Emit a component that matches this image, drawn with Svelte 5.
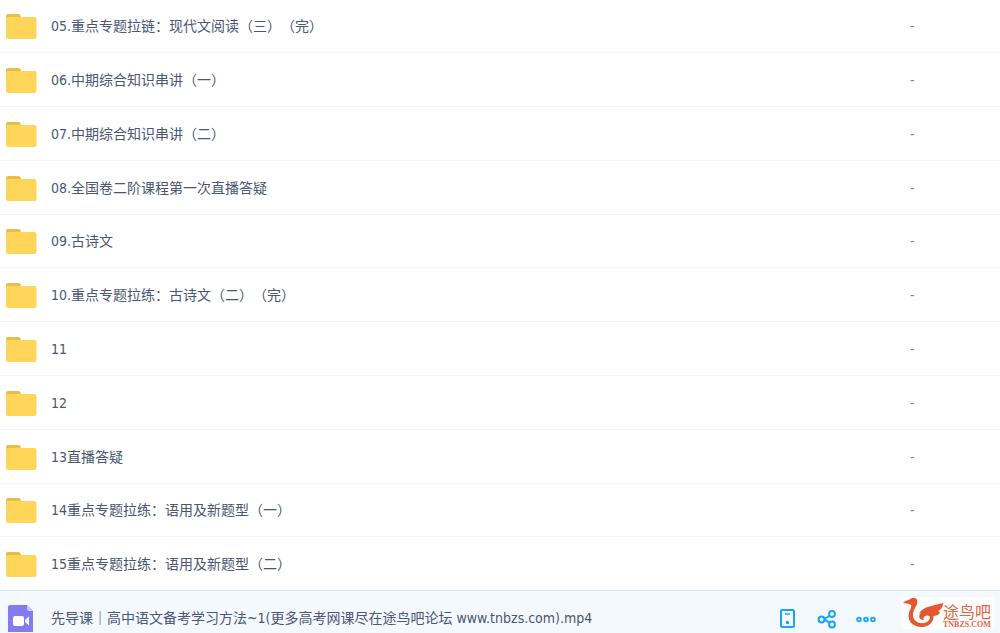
<script>
    const folders = [
        '05.重点专题拉链：现代文阅读（三）（完）',
        '06.中期综合知识串讲（一）',
        '07.中期综合知识串讲（二）',
        '08.全国卷二阶课程第一次直播答疑',
        '09.古诗文',
        '10.重点专题拉练：古诗文（二）（完）',
        '11',
        '12',
        '13直播答疑',
        '14重点专题拉练：语用及新题型（一）',
        '15重点专题拉练：语用及新题型（二）'
    ];

    const video = '先导课｜高中语文备考学习方法~1(更多高考网课尽在途鸟吧论坛 www.tnbzs.com).mp4';
</script>

<main>
    <table>
        <tbody>
            {#each folders as folder}
                <tr>
                    <td>
                        <div class="name">
                            <svg class="icon" width="32" height="28" viewBox="0 0 32 28" aria-hidden="true">
                                <path d="M1 10V4Q1 2 3 2h10.500q1.500 0 2 1.500L17 10z" fill="#e7bd4b" />
                                <path d="M1 6.500Q1 5 2.500 5H29.500Q31.500 5 31.500 7V25Q31.500 27 29.500 27H3Q1 27 1 25z" fill="#ffd65a" />
                            </svg>
                            <span>{folder}</span>
                        </div>
                    </td>
                    <td class="actions"></td>
                    <td class="size">-</td>
                </tr>
            {/each}
            <tr class="active">
                <td>
                    <div class="name">
                        <svg class="icon" width="32" height="28" viewBox="0 0 32 28" aria-hidden="true">
                            <path d="M3 3Q3 1 5 1H22L28 7V28H3z" fill="#837cf1" />
                            <path d="M22 1L28 7H24Q22 7 22 5z" fill="#c9c6fb" />
                            <rect x="8" y="12" width="11" height="10" rx="2" fill="#fff" />
                            <path d="M20 16L24 12.500V21.500L20 18z" fill="#fff" />
                        </svg>
                        <span>{video}</span>
                    </div>
                </td>
                <td class="actions">
                    <div class="buttons">
                        <button aria-label="发送到手机">
                            <svg width="20" height="22" viewBox="0 0 20 22" fill="none" stroke="#16a5f3" stroke-width="2">
                                <rect x="3" y="3" width="13" height="17" rx="1.500" />
                                <path d="M7 7h5" stroke-width="1.500" />
                                <circle cx="9.500" cy="15.500" r="1.700" fill="#16a5f3" stroke="none" />
                            </svg>
                        </button>
                        <button aria-label="分享">
                            <svg width="20" height="22" viewBox="0 0 20 22" fill="none" stroke="#16a5f3" stroke-width="2">
                                <circle cx="4.500" cy="12.500" r="2.900" />
                                <circle cx="15" cy="7" r="2.900" />
                                <circle cx="15" cy="17.500" r="2.900" />
                                <path d="M7.500 11.500Q10.500 11 12.500 8.500M7.500 13Q10 13.500 12.500 16" />
                            </svg>
                        </button>
                        <button aria-label="更多">
                            <svg width="20" height="22" viewBox="0 0 20 22" fill="none" stroke="#16a5f3" stroke-width="1.800">
                                <circle cx="3" cy="12.500" r="1.900" />
                                <circle cx="10" cy="12.500" r="1.900" />
                                <circle cx="17" cy="12.500" r="1.900" />
                            </svg>
                        </button>
                    </div>
                </td>
                <td class="size"></td>
            </tr>
        </tbody>
    </table>

    <div class="watermark">
        <svg width="40" height="32" viewBox="0 0 40 32" fill="#e4582f" aria-hidden="true">
            <path d="M0 6C2 4 4 3 6 3C9 0 13 0 14 3C15 5 14 8 12 11C9 16 9 22 14 25C20 28 27 25 27 20C26 18 23 18 21 20C20 21 20 22 21 23C17 23 15 20 17 17C20 13 26 13 29 16C33 20 29 30 19 30C9 30 4 23 6 16C7 12 9 10 8 8C6 6 3 7 0 6Z" />
            <path d="M16 17C20 9 30 9 40 6C40 10 38 13 35 14L37 15C36 18 33 19 30 19C28 15 22 13 16 17Z" />
        </svg>
        <div class="brand">
            <b>途鸟吧</b>
            <small>TNBZS.COM</small>
        </div>
    </div>
</main>

<style>
    :global(body) {
        background: #fff;
    }
    main {
        position: relative;
        height: 100vh;
        overflow: hidden;
        font-family: "DejaVu Sans Condensed", "Noto Sans", "Noto Sans CJK SC", sans-serif;
        font-size: 14px;
        line-height: 20px;
        text-spacing-trim: space-all;
        color: #4b5672;
    }
    table {
        width: 100%;
        border-spacing: 0;
    }
    tr {
        height: 54px;
    }
    tr:first-child,
    tr:nth-child(5n) {
        height: 53px;
    }
    td {
        box-sizing: border-box;
        padding: 0;
        border-bottom: 1px solid #f3f5fa;
    }
    tr:nth-child(11) td {
        border-bottom-color: #d9e6f5;
    }
    .name {
        display: flex;
        align-items: center;
        gap: 14px;
        padding-left: 5px;
        white-space: nowrap;
    }
    .icon {
        flex: none;
    }
    .actions {
        width: 132px;
    }
    .size {
        width: 90px;
        color: #7b8190;
    }
    .active {
        background: #f3f9fe;
    }
    .buttons {
        display: flex;
        gap: 19px;
    }
    button {
        display: flex;
        padding: 0;
        border: 0;
        background: none;
        cursor: pointer;
    }
    .watermark {
        position: absolute;
        right: 5px;
        bottom: 4px;
        display: flex;
        align-items: center;
        padding: 0 4px 0 2px;
        background: #fdfdfe;
    }
    .brand {
        display: flex;
        flex-direction: column;
        padding-top: 6px;
        color: #e4633f;
    }
    .brand b {
        font-family: "Noto Sans CJK SC", sans-serif;
        font-size: 16px;
        font-weight: 400;
        line-height: 16px;
    }
    .brand small {
        margin-top: 2px;
        font-family: "Liberation Serif", serif;
        font-size: 8px;
        font-weight: bold;
        line-height: 8px;
    }
</style>
